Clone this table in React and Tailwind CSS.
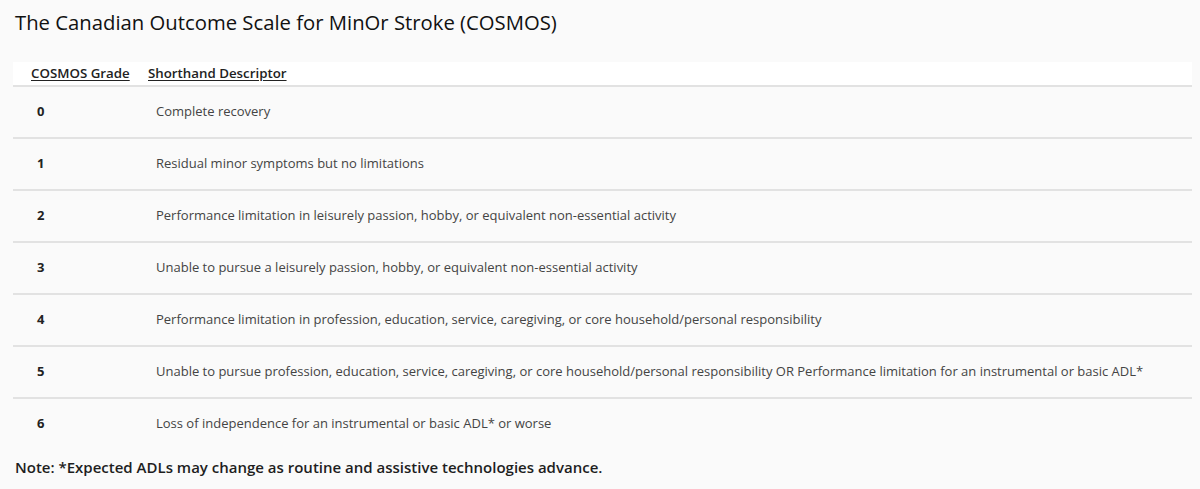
const rows = [
  ['0', 'Complete recovery'],
  ['1', 'Residual minor symptoms but no limitations'],
  ['2', 'Performance limitation in leisurely passion, hobby, or equivalent non-essential activity'],
  ['3', 'Unable to pursue a leisurely passion, hobby, or equivalent non-essential activity'],
  ['4', 'Performance limitation in profession, education, service, caregiving, or core household/personal responsibility'],
  ['5', 'Unable to pursue profession, education, service, caregiving, or core household/personal responsibility OR Performance limitation for an instrumental or basic ADL*'],
  ['6', 'Loss of independence for an instrumental or basic ADL* or worse'],
]

export default function App() {
  return (
    <div
      className="w-[1200px] h-[489px] bg-[#fafafa] text-[#222] overflow-hidden"
      style={{ fontFamily: '"Open Sans", "Liberation Sans", sans-serif' }}
    >
      <h1 className="pl-[15px] pt-[8px] h-[62px] text-[20.3px] font-medium text-[#111] leading-[28px]">
        The Canadian Outcome Scale for MinOr Stroke (COSMOS)
      </h1>

      {/* Table */}
      <div className="ml-[13px] w-[1179px]">
        <div className="flex h-[25px] items-center bg-white border-b-2 border-[#e2e2e2] text-[13.3px] font-semibold text-[#222]">
          <div className="w-[135px] pl-[18px] shrink-0">
            <span className="underline underline-offset-2">COSMOS Grade</span>
          </div>
          <div>
            <span className="underline underline-offset-2">Shorthand Descriptor</span>
          </div>
        </div>

        {rows.map(([grade, text], i) => (
          <div
            key={grade}
            className={`flex items-center h-[52px] text-[13px] ${i < rows.length - 1 ? 'border-b-2 border-[#e2e2e2]' : 'pb-[3px]'}`}
          >
            <div className="w-[143px] pl-[24px] shrink-0 font-bold text-[#222]">{grade}</div>
            <div className="text-[#444]">{text}</div>
          </div>
        ))}
      </div>

      <p className="pl-[15px] pt-[5px] text-[15px] font-semibold text-[#1e1e1e]">
        Note: *Expected ADLs may change as routine and assistive technologies advance.
      </p>
    </div>
  )
}
